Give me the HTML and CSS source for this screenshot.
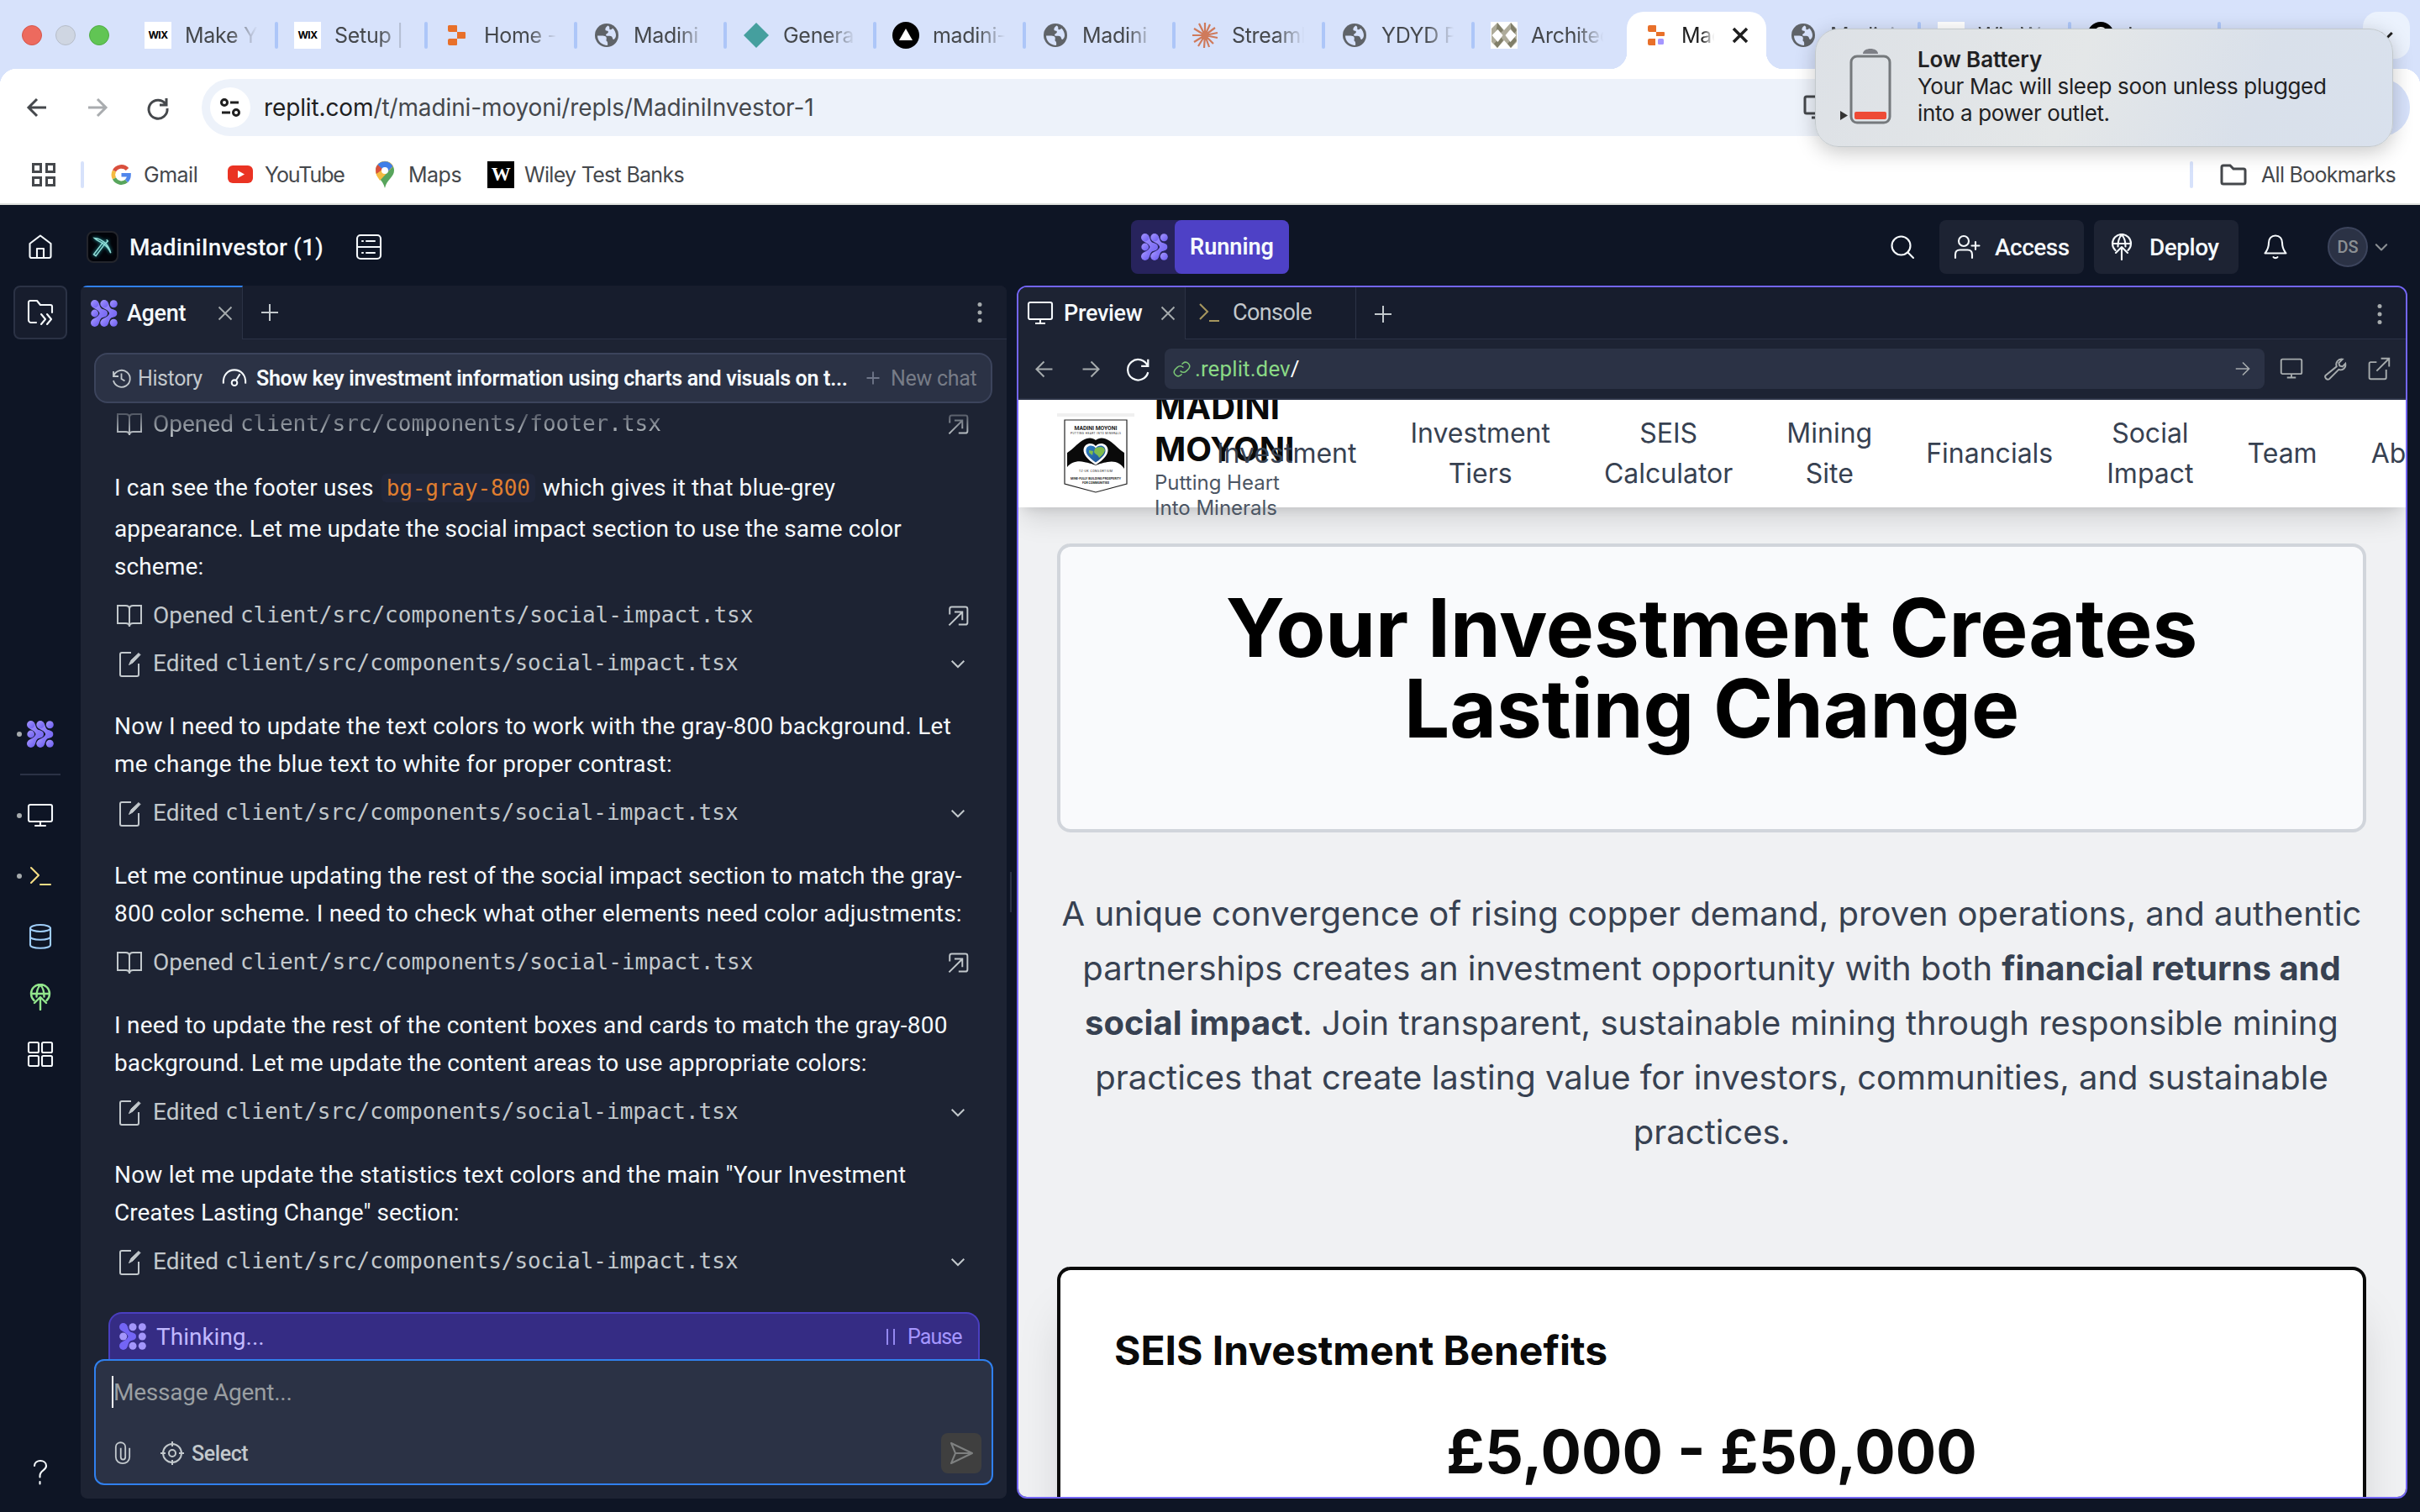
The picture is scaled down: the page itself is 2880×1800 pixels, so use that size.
FILE: index.html
```html
<!DOCTYPE html>
<html lang="en">
<head>
<meta charset="utf-8">
<title>MadiniInvestor (1)</title>
<link rel="stylesheet" href="styles.css">
</head>
<body>
<svg class="defs" aria-hidden="true">
  <defs>
    <linearGradient id="violet" x1="0" y1="0" x2="1" y2="1"><stop offset="0" stop-color="#a596ff"/><stop offset="1" stop-color="#6b5cf0"/></linearGradient>
    <linearGradient id="ocean" x1="0" y1="0" x2="1" y2="1"><stop offset="0" stop-color="#2f7fc4"/><stop offset="1" stop-color="#1d4f8f"/></linearGradient>
  </defs>
  <symbol id="globe" viewBox="0 0 32 32"><circle cx="16" cy="16" r="14" fill="#5f6368"/><path d="M5 16.500c4 0 8-.5 10 1 1.500 1.500.5 3 .5 5 1.500 1 2 2.500 1.500 5.500-6.500 0-12-5-12-11.500zM17.500 4.500C15 6 14 7.500 14.500 10c1.500 1 3 0 3.500 2-.5 2-3 2-3 4 2 2 5-.5 7 1.500 1.500 2 .5 3 2.500 3.500 1.500-1 2.500-3 2.500-5 0-3-1.500-6.500-4-8.500-.5 1.500-2 2-3.500 1.500-.5-2 .5-3-2-4.500z" fill="#d7e2fb"/></symbol>
  <symbol id="agent" viewBox="0 0 32 32">
    <g fill="url(#violet)"><path d="M1.500 8 8 1.500C11 5 10 8 13 10.500c3 1.500 7 1 7 5.500s-4 4-7 5.500c-3 2.500-2 5.500-5 9L1.500 24C5 21 9 20.500 10.500 16 9 11.500 5 11 1.500 8z"/><path d="M12.700 8 19.300 1.500c3 3.500 2 6.500 5 9 3 1.500 7 1 7 5.500s-4 4-7 5.500c-3 2.500-2 5.500-5 9L12.700 24c3.300-3 8-3.500 9.500-8-1.500-4.500-6.200-5-9.500-8z"/>
    <circle cx="4.700" cy="4.700" r="4.700"/><circle cx="16" cy="4.700" r="4.700"/><circle cx="27.300" cy="4.700" r="4.500"/><circle cx="4.700" cy="16" r="4.400"/><circle cx="4.700" cy="27.300" r="4.700"/><circle cx="16" cy="27.300" r="4.700"/><circle cx="27.300" cy="27.300" r="4.500"/></g>
  </symbol>
  <symbol id="thinking" viewBox="0 0 32 32">
    <g fill="#a396fa"><circle cx="16" cy="4.700" r="4.500"/><circle cx="27.300" cy="4.700" r="4.500"/><circle cx="4.700" cy="16" r="4.500"/><circle cx="27.300" cy="16" r="4.500"/><circle cx="16" cy="27.300" r="4.500"/><circle cx="27.300" cy="27.300" r="4.500"/></g>
    <g fill="#7365f5"><path d="M1.500 8 8 1.500C11 5 10 8 13 10.500c3 1.500 7 1 7 5.500s-4 4-7 5.500c-3 2.500-2 5.500-5 9L1.500 24C5 21 9 20.500 10.500 16 9 11.500 5 11 1.500 8z"/><circle cx="4.700" cy="4.700" r="4.700"/><circle cx="4.700" cy="27.300" r="4.700"/></g>
  </symbol>
  <symbol id="monitor" viewBox="0 0 32 32"><path d="M4 3h24a2 2 0 0 1 2 2v16a2 2 0 0 1-2 2H4a2 2 0 0 1-2-2V5a2 2 0 0 1 2-2zM16 23v5M10 28h12"/></symbol>
  <symbol id="terminal" viewBox="0 0 32 32"><path d="m5 6 9 9-9 9M16 26h12"/></symbol>
  <symbol id="deploy" viewBox="0 0 32 32"><path d="M8.500 20A11 11 0 1 1 23.500 20M5 12h22M16 31V16.500M9 23l7-7 7 7M16 1.500c-3 3-4.500 7-4.500 14M16 1.500c3 3 4.500 7 4.500 14"/></symbol>
  <symbol id="x" viewBox="0 0 32 32"><path d="m8 8 16 16M24 8 8 24"/></symbol>
  <symbol id="plus" viewBox="0 0 32 32"><path d="M16 6v20M6 16h20"/></symbol>
  <symbol id="left" viewBox="0 0 32 32"><path d="M27 16H6M16 6 6 16l10 10"/></symbol>
  <symbol id="right" viewBox="0 0 32 32"><path d="M5 16h21M16 6l10 10-10 10"/></symbol>
  <symbol id="down" viewBox="0 0 32 32"><path d="m7 12 9 9 9-9"/></symbol>
  <symbol id="kebab" viewBox="0 0 32 32"><g fill="#a6abad" stroke="none"><circle cx="16" cy="6.500" r="2.500"/><circle cx="16" cy="16" r="2.500"/><circle cx="16" cy="25.500" r="2.500"/></g></symbol>
  <symbol id="book" viewBox="0 0 32 32"><path d="M16 8c0-3-2-4-4.500-4H2v21h9.500c2.500 0 4.500 1 4.500 4 0-3 2-4 4.500-4H30V4h-9.500C18 4 16 5 16 8zM16 8v20"/></symbol>
  <symbol id="edit" viewBox="0 0 32 32"><path d="M18 3H7a2 2 0 0 0-2 2v24a2 2 0 0 0 2 2h18a2 2 0 0 0 2-2V16"/><path d="M15.500 17.500 18 12l9-8.500 2 2L20 15z" fill="currentColor" stroke-width="1"/></symbol>
  <symbol id="open" viewBox="0 0 32 32"><path d="M4 14V6a3 3 0 0 1 3-3h20a3 3 0 0 1 3 3v20a3 3 0 0 1-3 3H17M3 30 22 11M11 10.500h11.500v12"/></symbol>
  <symbol id="reload" viewBox="0 0 32 32"><path d="M29 3v9h-9M28.500 12A13.500 13.500 0 1 0 29 20"/></symbol>
  <symbol id="weave" viewBox="0 0 32 32"><rect width="32" height="32" fill="#fff"/><path d="M1 8 8 1l8 9 8-9 7 7v16l-7 7-8-9-8 9-7-7z" fill="#aeab9a"/><path d="m8 1 7 9-6 6-2-8zM24 1l7 9-3 4-4-6zM8 31l7-9-3-4-8 8zM24 31l7-9-3-4-8 8z" fill="#807e69"/><path d="m8.500 9 6 7-6 8-7-8zM23.500 9l7 7-7 8-6-8z" fill="#fff"/></symbol>
  <symbol id="replit" viewBox="0 0 32 32"><g fill="#e8702a"><path d="M6 4h9a1 1 0 0 1 1 1v7H7a2 2 0 0 1-2-2V5zM16 12h9a1 1 0 0 1 1 1v6a1 1 0 0 1-1 1h-9zM7 20h9v7a1 1 0 0 1-1 1H7a2 2 0 0 1-2-2v-4a2 2 0 0 1 2-2z"/></g></symbol>
  <symbol id="replit-run" viewBox="0 0 32 32"><g fill="#e8702a"><path d="M5 4h7a1 1 0 0 1 1 1v7H5a2 2 0 0 1-2-2V6a2 2 0 0 1 2-2zM13 12h9a1 1 0 0 1 1 1v3a1 1 0 0 1-1 1h-9zM5 20h7v8H5a2 2 0 0 1-2-2v-4a2 2 0 0 1 2-2z"/></g><rect x="15" y="20" width="7" height="7" rx="1.500" fill="#a596ff"/></symbol>
</svg>

<div class="tabstrip">
  <div class="lights"><i class="red"></i><i class="gray"></i><i class="green"></i></div>
  <div class="tab"><span class="wix">WIX</span><span class="title">Make Your</span></div>
  <div class="tab"><span class="wix">WIX</span><span class="title">Setup | W</span></div>
  <div class="tab"><svg><use href="#replit"/></svg><span class="title">Home - R</span></div>
  <div class="tab"><svg><use href="#globe"/></svg><span class="title">Madini I</span></div>
  <div class="tab"><svg viewBox="0 0 32 32"><path d="M16 1 31 16 16 31 1 16z" fill="#459f9e"/></svg><span class="title">General i</span></div>
  <div class="tab"><svg viewBox="0 0 32 32"><circle cx="16" cy="16" r="16"/><path d="m16 8 8 14H8z" fill="#fff"/></svg><span class="title">madini-in</span></div>
  <div class="tab"><svg><use href="#globe"/></svg><span class="title">Madini I</span></div>
  <div class="tab"><svg viewBox="0 0 32 32"><path d="M16 16V1M16 16l6-13M16 16 28 7M16 16l15-3M16 16l15 3M16 16l10 10M16 16l5 14M16 16l-1 15M16 16 8 29M16 16 3 24M16 16H1M16 16 3 8M16 16 9 2" stroke="#cf7a5b" stroke-width="2.200"/></svg><span class="title">Streamli</span></div>
  <div class="tab"><svg><use href="#globe"/></svg><span class="title">YDYD Pr</span></div>
  <div class="tab last"><svg><use href="#weave"/></svg><span class="title">Architect</span></div>
  <div class="tab active"><svg><use href="#replit-run"/></svg><span class="title">Mad</span><svg class="close"><use href="#x"/></svg></div>
  <div class="tab after"><svg><use href="#globe"/></svg><span class="title">Madini I</span></div>
  <div class="tab"><span class="wix"></span><span class="title">Wix Webs</span></div>
  <div class="tab"><svg viewBox="0 0 32 32"><circle cx="16" cy="16" r="16"/><circle cx="16" cy="14" r="7" fill="none" stroke="#fff" stroke-width="2"/></svg><span class="title">Inves</span></div>
  <span class="more"><svg><use href="#down"/></svg></span>
</div>

<div class="toolbar">
  <svg class="nav-ico"><use href="#left"/></svg>
  <svg class="nav-ico off"><use href="#right"/></svg>
  <svg class="nav-ico" viewBox="0 0 32 32"><path d="M26 5v8h-8M25.500 12.500A11 11 0 1 0 27 17"/></svg>
  <div class="omnibox">
    <span class="site"><svg viewBox="0 0 28 28"><circle cx="7" cy="8" r="3.500"/><path d="M14 8h10M4 20h10"/><circle cx="21" cy="20" r="3.500"/></svg></span>
    <span class="address"><b>replit.com</b>/t/madini-moyoni/repls/MadiniInvestor-1</span>
    <svg class="install"><use href="#monitor"/></svg>
    <span class="profile"></span>
  </div>
</div>

<div class="bookmarks">
  <svg class="apps" viewBox="0 0 28 28"><path d="M1.500 1.500h9v9h-9zM17.500 1.500h9v9h-9zM1.500 17.500h9v9h-9zM17.500 17.500h9v9h-9z"/></svg>
  <i class="bar"></i>
  <div class="bm gmail"><svg viewBox="0 0 24 24"><g fill="none" stroke-width="4.600"><path d="M19.500 5.500A9.500 9.500 0 0 0 4 7.500" stroke="#d94f3d"/><path d="M4 7.500a9.500 9.500 0 0 0 0 9" stroke="#f5bb41"/><path d="M4 16.500a9.500 9.500 0 0 0 14.500 3" stroke="#58a55c"/><path d="M18.500 19.500c2-1.800 3-4.500 3-7.300H12.500" stroke="#5086ec"/></g></svg><span>Gmail</span></div>
  <div class="bm yt"><svg viewBox="0 0 30 24"><rect y="1" width="30" height="21" rx="6" fill="#ea3323"/><path d="m12 7 8 4.500-8 4.500z" fill="#fff"/></svg><span>YouTube</span></div>
  <div class="bm maps"><svg viewBox="0 0 22 32"><path d="M11 0a11 11 0 0 0-11 11c0 8 8.500 10 11 21 2.500-11 11-13 11-21A11 11 0 0 0 11 0z" fill="#58a55c"/><path d="M2.500 4A11 11 0 0 1 21 6L5 23C3 19 0 17 0 11z" fill="#f5bb41"/><path d="M2.500 4 9 9l-8 6C-.5 10 0 7 2.500 4z" fill="#d94f3d"/><path d="M2.500 4A11 11 0 0 1 20.500 6L13 14z" fill="#3f7fe8"/><circle cx="11" cy="11" r="4" fill="#fff"/></svg><span>Maps</span></div>
  <div class="bm wiley"><i>W</i><span>Wiley Test Banks</span></div>
  <i class="bar end"></i>
  <div class="bm all"><svg viewBox="0 0 32 26"><path d="M2 4a2 2 0 0 1 2-2h8l4 4h12a2 2 0 0 1 2 2v14a2 2 0 0 1-2 2H4a2 2 0 0 1-2-2z" fill="none" stroke="#45484c" stroke-width="3"/></svg><span>All Bookmarks</span></div>
</div>

<div class="app">
  <header class="topbar">
    <svg class="i32" viewBox="0 0 32 32"><path d="M3.500 12 16 2.500 28.500 12v15a2 2 0 0 1-2 2h-21a2 2 0 0 1-2-2zM12 29V18h8v11"/></svg>
    <span class="tile"><svg viewBox="0 0 32 32"><path d="M4 3c11 1 20 9 23 21-3-7-7-11-12-14S7 6 4 3zM18 12 6 28l-3-2L16 9M21 5l2 2-6 6" /></svg></span>
    <span class="name">MadiniInvestor (1)</span>
    <svg class="i32 server" viewBox="0 0 32 32"><rect x="2" y="2" width="28" height="28" rx="4"/><path d="M2 16h28M13 9h10M13 23h10M8 9h1M8 23h1"/></svg>
    <div class="run"><span><svg><use href="#agent"/></svg></span><b>Running</b></div>
    <svg class="i32 search" viewBox="0 0 32 32"><circle cx="14.500" cy="14.500" r="11"/><path d="m22.500 22.500 6.500 6.500"/></svg>
    <div class="btn access"><svg class="i32" viewBox="0 0 32 32"><circle cx="12" cy="9" r="6"/><path d="M2 29v-4c0-4 2-5.500 5.500-5.500h9c3.500 0 5.500 1.500 5.500 5.500v4M26 10v9M21.500 14.500h9"/></svg><span>Access</span></div>
    <div class="btn dep"><svg class="i32"><use href="#deploy"/></svg><span>Deploy</span></div>
    <svg class="i32 bell" viewBox="0 0 32 32"><path d="M16 2.500c-5 0-8 3.500-8 8.500 0 7-2 9-4.500 12.500h25C26 20 24 18 24 11c0-5-3-8.500-8-8.500zM13.500 28c1 1.500 4 1.500 5 0"/></svg>
    <span class="avatar">DS</span>
    <svg class="caret"><use href="#down"/></svg>
  </header>

  <div class="workspace">
    <nav class="rail">
      <span class="files"><svg viewBox="0 0 32 32"><path d="M11 28H5a3 3 0 0 1-3-3V4a2 2 0 0 1 2-2h8l4 5h12a2 2 0 0 1 2 2v7M17 18l5 6-5 6M24 18l5 6-5 6"/></svg></span>
      <span class="tool r1 on"><svg><use href="#agent"/></svg></span>
      <i class="rule"></i>
      <span class="tool r2 on"><svg><use href="#monitor"/></svg></span>
      <span class="tool r3 on"><svg><use href="#terminal"/></svg></span>
      <span class="tool r4"><svg viewBox="0 0 32 32"><ellipse cx="16" cy="6" rx="12" ry="4"/><path d="M4 6v20c0 5 24 5 24 0V6M4 16c0 5 24 5 24 0"/></svg></span>
      <span class="tool r5"><svg><use href="#deploy"/></svg></span>
      <span class="tool r6"><svg viewBox="0 0 32 32"><rect x="2" y="2" width="12" height="12" rx="1.500"/><rect x="18" y="2" width="12" height="12" rx="1.500"/><rect x="2" y="18" width="12" height="12" rx="1.500"/><rect x="18" y="18" width="12" height="12" rx="1.500"/></svg></span>
      <span class="tool help"><svg viewBox="0 0 32 32"><path d="M9 9c0-8 14-8 14 0 0 6-7.500 5-7.500 12v1.500M15.500 28v2.500"/></svg></span>
    </nav>

    <section class="pane agent-pane">
      <div class="tabs">
        <div class="ptab current"><svg class="logo"><use href="#agent"/></svg><span>Agent</span><svg class="cl"><use href="#x"/></svg></div>
        <svg class="add"><use href="#plus"/></svg>
        <svg class="dots"><use href="#kebab"/></svg>
      </div>
      <div class="history">
        <svg viewBox="0 0 24 24"><path d="M3 4v6h6M3.500 9A10 10 0 1 1 3 15M12.500 6.500V13l4 2.500"/></svg><span class="h">History</span>
        <svg class="gauge" viewBox="0 0 32 32"><path d="M2 23C0 0 32 0 30 23M18 19l5-8"/><circle cx="16" cy="22" r="3.500"/></svg>
        <b>Show key investment information using charts and visuals on t...</b>
        <svg class="pl"><use href="#plus"/></svg><span class="n">New chat</span>
      </div>
      <div class="chat">
        <div class="row fade"><svg><use href="#book"/></svg><span class="act">Opened</span><code>client/src/components/footer.tsx</code><svg class="end"><use href="#open"/></svg></div>
        <p class="tall"><span class="ln c1">I can see the footer uses <code>bg-gray-800</code> which gives it that blue-grey</span><span class="ln c2">appearance. Let me update the social impact section to use the same color</span><span class="ln">scheme:</span></p>
        <div class="row"><svg><use href="#book"/></svg><span class="act">Opened</span><code>client/src/components/social-impact.tsx</code><svg class="end"><use href="#open"/></svg></div>
        <div class="row"><svg><use href="#edit"/></svg><span class="act">Edited</span><code>client/src/components/social-impact.tsx</code><svg class="end"><use href="#down"/></svg></div>
        <p><span class="ln wide">Now I need to update the text colors to work with the gray-800 background. Let</span><span class="ln wide">me change the blue text to white for proper contrast:</span></p>
        <div class="row"><svg><use href="#edit"/></svg><span class="act">Edited</span><code>client/src/components/social-impact.tsx</code><svg class="end"><use href="#down"/></svg></div>
        <p><span class="ln">Let me continue updating the rest of the social impact section to match the gray-</span><span class="ln mid">800 color scheme. I need to check what other elements need color adjustments:</span></p>
        <div class="row"><svg><use href="#book"/></svg><span class="act">Opened</span><code>client/src/components/social-impact.tsx</code><svg class="end"><use href="#open"/></svg></div>
        <p><span class="ln wide">I need to update the rest of the content boxes and cards to match the gray-800</span><span class="ln">background. Let me update the content areas to use appropriate colors:</span></p>
        <div class="row"><svg><use href="#edit"/></svg><span class="act">Edited</span><code>client/src/components/social-impact.tsx</code><svg class="end"><use href="#down"/></svg></div>
        <p><span class="ln mid">Now let me update the statistics text colors and the main "Your Investment</span><span class="ln slim">Creates Lasting Change" section:</span></p>
        <div class="row"><svg><use href="#edit"/></svg><span class="act">Edited</span><code>client/src/components/social-impact.tsx</code><svg class="end"><use href="#down"/></svg></div>
      </div>
      <div class="thinking"><svg><use href="#thinking"/></svg><span>Thinking...</span><i class="pausebars"></i><span class="pause">Pause</span></div>
      <div class="composer">
        <div class="prompt">Message Agent...</div>
        <div class="actions">
          <svg class="clip" viewBox="0 0 22 30"><path d="M20 8v12c0 11-18 11-18 0V7c0-8 12.500-8 12.500 0v13c0 4.500-6 4.500-6 0V8"/></svg>
          <svg class="target" viewBox="0 0 28 28"><circle cx="14" cy="14" r="11"/><circle cx="14" cy="14" r="4"/><path d="M14 0v6M14 22v6M0 14h6M22 14h6"/></svg>
          <span>Select</span>
          <i class="send"><svg viewBox="0 0 32 32"><path d="M4 4 29 16 4 28l5-12zM9 16h19"/></svg></i>
        </div>
      </div>
    </section>

    <div class="gutter"><i></i></div>

    <section class="pane preview-pane">
      <div class="tabs">
        <div class="ptab pv"><svg class="i32"><use href="#monitor"/></svg><span>Preview</span><svg class="cl"><use href="#x"/></svg></div>
        <div class="ptab con"><svg class="i32"><use href="#terminal"/></svg><span>Console</span></div>
        <svg class="add"><use href="#plus"/></svg>
        <svg class="dots"><use href="#kebab"/></svg>
      </div>
      <div class="urlbar">
        <svg class="a"><use href="#left"/></svg><svg class="a"><use href="#right"/></svg><svg class="re"><use href="#reload"/></svg>
        <div class="url"><svg class="link" viewBox="0 0 24 24"><path d="M10 14a5 5 0 0 0 7.500.5l3-3a5 5 0 0 0-7-7L12 6M14 10a5 5 0 0 0-7.500-.5l-3 3a5 5 0 0 0 7 7L12 18"/></svg><span>.replit.dev<b>/</b></span><svg class="go"><use href="#right"/></svg></div>
        <svg class="t"><use href="#monitor"/></svg>
        <svg class="t" viewBox="0 0 32 32"><path d="M19 13c-2-5 2-11 8-10l-5 5 1 4 4 1 4-4c1 6-4 10-9 8L9 30c-3 2-7-2-5-5z" transform="translate(-1 0)"/></svg>
        <svg class="t" viewBox="0 0 32 32"><path d="M13 7H5a2 2 0 0 0-2 2v19a2 2 0 0 0 2 2h19a2 2 0 0 0 2-2V17M19 2h11v11M30 2 13 19"/></svg>
      </div>
      <div class="site-page">
        <header class="site-nav">
          <div class="brand">
            <svg viewBox="0 0 92 96"><path d="M0 0h92v4H0z" fill="#f0f0f0"/><path d="M9 8h74v76L46 94 9 84z" fill="#fff" stroke="#222" stroke-width="1.200"/>
              <g text-anchor="middle" font-family="Roboto, sans-serif" font-weight="700" fill="#222"><text x="46" y="19.500" font-size="6.800" textLength="51">MADINI MOYONI</text><text x="46" y="25" font-size="3.200" textLength="60" font-weight="400">PUTTING HEART INTO MINERALS</text><text x="46" y="70" font-size="3.600" textLength="40" font-weight="400">TZ-UK CONSORTIUM</text><text x="46" y="78.500" font-size="3.600" textLength="60">MINE-FULLY BUILDING PROSPERITY</text><text x="46" y="83.500" font-size="3.600" textLength="32">FOR COMMUNITIES</text></g>
              <path d="M12 47c7-4 12-11 18-14.500 6-4 12-4 16-.5 4-3.500 10-3.500 16 .5 6 3.500 11 10.500 18 14.500v19c-4-7-12-10-20-8-6 1-9 2-14 4-5-2-8-3-14-4-8-2-16 1-20 6z" fill="#0a0a0a"/>
              <path d="M46 61.500C36 55 31 49 31.500 43c1-8 11-9 14.500-4 3.500-5 13.500-4 14.500 4 .5 6-4.500 12-14.500 18.500z" fill="#fff"/>
              <path d="M46 58.500C37 52 34 48 34.500 43.500c1-6.500 9-6 11.500-2 2.500-4 10.500-4.500 11.500 2 .5 4.500-2.500 8.500-11.500 15z" fill="url(#ocean)"/><path d="M45 42c5-3 11-3 12 2-1 4-4 7-7 9-1-4-5-4-6-7zM38 44l5 1-1 5-4-3z" fill="#7fbb4c"/></svg>
            <div class="words"><strong>MADINI<br>MOYONI</strong><small>Putting Heart<br>Into Minerals</small></div>
          </div>
          <div class="links"><span>Investment</span><span>Investment<br>Tiers</span><span>SEIS<br>Calculator</span><span>Mining<br>Site</span><span>Financials</span><span>Social<br>Impact</span><span>Team</span><span>About</span></div>
        </header>
        <div class="hero"><h1>Your Investment Creates<br>Lasting Change</h1></div>
        <p class="lead">A unique convergence of rising copper demand, proven operations, and authentic<br>partnerships creates an investment opportunity with both <b>financial returns and</b><br><b>social impact</b>. Join transparent, sustainable mining through responsible mining<br>practices that create lasting value for investors, communities, and sustainable<br>practices.</p>
        <div class="benefits"><h2>SEIS Investment Benefits</h2><div class="amount">£5,000 - £50,000</div></div>
      </div>
    </section>
  </div>
</div>

<aside class="notice">
  <svg viewBox="0 0 68 92"><path d="M30 7c0-8 18-8 18 0z" fill="#7d7f86"/><rect x="16" y="10" width="46" height="79" rx="7" fill="none" stroke="#75797c" stroke-width="3"/><rect x="20" y="76" width="38" height="9" rx="2" fill="#ee4b36"/><path d="m3 75 9 5.500L3 86z" fill="#333"/></svg>
  <div><b>Low Battery</b><span>Your Mac will sleep soon unless plugged</span><span class="s">into a power outlet.</span></div>
</aside>
</body>
</html>
```
FILE: styles.css
```css
* { box-sizing: border-box; }
html, body { margin: 0; width: 2880px; height: 1800px; overflow: hidden; }
body { font-family: Inter, sans-serif; background: #0e1525; display: flex; flex-direction: column; position: relative; }
svg { display: block; flex: none; fill: none; overflow: visible; }
i { font-style: normal; }
.defs { position: absolute; width: 0; height: 0; }
.i32 { width: 32px; height: 32px; }

/* Browser tab strip */
.tabstrip { height: 82px; flex: none; background: #d7e2fb; display: flex; align-items: center; padding-top: 2px; overflow: hidden; }
.lights { display: flex; gap: 16px; padding-left: 26px; width: 172px; flex: none; }
.lights i { width: 24px; height: 24px; border-radius: 50%; }
.red { background: #ed6a5e; border: 1px solid #d5564b; }
.gray { background: #cfd6e2; border: 1px solid #b6bdc9; }
.green { background: #61c554; border: 1px solid #4fad43; }
.tab { width: 178px; flex: none; display: flex; align-items: center; height: 32px; position: relative; }
.tab > svg { width: 32px; height: 32px; fill: #000; }
.tab::after { content: ""; width: 4px; height: 32px; background: #adc6f8; border-radius: 2px; margin-left: 19px; }
.tab .title { margin-left: 16px; width: 88px; flex: none; overflow: hidden; white-space: nowrap; font-size: 25px; letter-spacing: -.3px; color: #45484c; -webkit-mask-image: linear-gradient(90deg, #000 60%, transparent 98%); mask-image: linear-gradient(90deg, #000 60%, transparent 98%); }
.wix { width: 32px; height: 32px; background: #fff; color: #000; font: 700 12px/32px Inter, sans-serif; text-align: center; letter-spacing: -.5px; flex: none; }
.tab.last { width: 162px; }
.tab.last::after, .tab.active::after { display: none; }
.tab.active { width: 166px; height: 68px; align-self: flex-end; background: #fff; border-radius: 20px 20px 0 0; padding-left: 22px; padding-bottom: 12px; }
.tab.active::before { content: ""; position: absolute; left: -20px; right: -20px; bottom: 0; height: 20px; background: radial-gradient(circle at 0 0, transparent 20px, #fff 20.500px) 0 0 / 20px 20px no-repeat, radial-gradient(circle at 100% 0, transparent 20px, #fff 20.500px) 100% 0 / 20px 20px no-repeat; }
.tab.active .title { width: 40px; margin-left: 11px; color: #1f1f1f; }
.tab.active .close { margin-left: 14px; stroke: #1f1f1f; stroke-width: 3.500; width: 32px; height: 32px; }
.tab.after { margin-left: 28px; width: 176px; }
.tab.after::after { margin-left: 16px; }
.more { width: 56px; height: 56px; margin-left: auto; margin-right: 12px; flex: none; border-radius: 18px; background: #ebf2fd; display: flex; align-items: center; justify-content: center; }
.more svg { width: 24px; height: 24px; stroke: #1f1f1f; stroke-width: 4; }

/* Browser toolbar */
.toolbar { height: 88px; flex: none; background: radial-gradient(circle at 20px 20px, #fff 20px, #d7e2fb 20.500px) 0 0 / 20px 20px no-repeat, radial-gradient(circle at 0 20px, #fff 20px, #d7e2fb 20.500px) 100% 0 / 20px 20px no-repeat, #fff; display: flex; align-items: center; padding: 4px 12px 0 28px; }
.nav-ico { width: 32px; height: 32px; margin-right: 40px; stroke: #45484c; stroke-width: 3; }
.nav-ico.off { stroke: #a9acaf; }
.nav-ico:nth-child(3) { margin-right: 36px; }
.omnibox { flex: 1; height: 68px; border-radius: 34px; background: #edf2fa; display: flex; align-items: center; padding-left: 10px; overflow: hidden; }
.site { width: 48px; height: 48px; border-radius: 50%; background: #fff; display: flex; align-items: center; justify-content: center; }
.site svg { width: 28px; height: 28px; stroke: #1f1f1f; stroke-width: 3; }
.address { margin-left: 16px; font-size: 28px; width: 662px; white-space: nowrap; letter-spacing: -.12px; color: #45484c; }
.address b { font-weight: 400; color: #1f1f1f; }
.install { width: 32px; height: 32px; margin-left: 1170px; stroke: #45484c; stroke-width: 3; }
.profile { margin-left: auto; width: 100px; height: 68px; background: #d7e2fb; }

/* Bookmarks */
.bookmarks { height: 74px; flex: none; background: #fff; border-bottom: 2px solid #dfe2dd; display: flex; align-items: center; padding: 3px 30px 0 38px; font-size: 25px; color: #45484c; white-space: nowrap; }
.apps { width: 28px; height: 28px; stroke: #45484c; stroke-width: 3; }
.bar { width: 4px; height: 32px; border-radius: 2px; background: #d7e2fb; margin: 0 32px 0 30px; flex: none; }
.bm { display: flex; align-items: center; flex: none; letter-spacing: -.5px; }
.gmail { width: 139px; } .gmail svg { width: 24px; height: 24px; margin-right: 15px; }
.yt { width: 176px; letter-spacing: -1.100px; } .yt svg { width: 30px; height: 24px; margin-right: 14px; }
.maps { width: 133px; } .maps svg { width: 22px; height: 32px; margin-right: 17px; }
.wiley { letter-spacing: -.7px; }
.wiley i { width: 32px; height: 32px; background: #000; color: #fff; font: 700 23px/32px "Liberation Serif", serif; text-align: center; margin-right: 12px; }
.bar.end { margin-left: auto; margin-right: 32px; }
.all { width: 208px; letter-spacing: -.7px; } .all svg { width: 32px; height: 26px; margin-right: 17px; }

/* Replit shell */
.app { flex: 1; min-height: 0; display: flex; flex-direction: column; color: #f5f9fc; font-family: Roboto, "Noto Sans", sans-serif; }
.topbar { height: 96px; flex: none; display: flex; align-items: center; padding: 4px 32px 0; white-space: nowrap; font-size: 28px; }
.topbar > svg, .btn svg, .rail svg { stroke: #f5f9fc; stroke-width: 2.100; stroke-linecap: round; stroke-linejoin: round; }
.tile { width: 38px; height: 38px; margin-left: 39px; border-radius: 8px; border: 2px solid #23252c; background: #02040a; display: flex; align-items: center; justify-content: center; }
.tile svg { width: 27px; height: 27px; stroke: #8fdcd6; stroke-width: 1.800; filter: drop-shadow(0 0 2px #24a8b0); }
.name { margin-left: 13px; width: 269px; font-weight: 500; letter-spacing: .1px; }
.run { margin-left: 891px; display: flex; width: 188px; height: 64px; border-radius: 8px; background: #27235c; }
.run span { width: 52px; padding: 16px 0 0 12px; }
.run svg { width: 32px; height: 32px; }
.run b { flex: 1; background: #4e41c6; border-radius: 8px; line-height: 64px; padding-left: 18px; font-weight: 600; font-size: 27px; }
.search { margin-left: 714px; }
.btn { width: 172px; height: 64px; background: #1d2333; border-radius: 8px; display: flex; align-items: center; padding-left: 17px; font-weight: 500; }
.btn span { margin-left: 17px; letter-spacing: -.5px; }
.access { margin-left: 28px; } .dep { margin-left: 12px; }
.bell { margin-left: 28px; }
.avatar { width: 48px; height: 48px; margin-left: 46px; border-radius: 50%; background: #2b3245; border: 2px solid #3c445c; color: #8b9094; font: 500 20px/44px Roboto, sans-serif; text-align: center; }
.topbar .caret { width: 22px; height: 22px; margin-left: 5px; stroke: #8b9094; stroke-width: 3; }

.workspace { height: 1444px; display: flex; }
.rail { width: 96px; flex: none; display: flex; flex-direction: column; align-items: center; }
.files { width: 64px; height: 64px; border: 2px solid #2b3245; border-radius: 8px; background: #171d2d; display: flex; align-items: center; justify-content: center; }
.files svg, .tool svg { width: 32px; height: 32px; }
.tool { height: 32px; width: 96px; display: flex; justify-content: center; position: relative; flex: none; }
.tool.on::before { content: ""; position: absolute; left: 20px; top: 13px; width: 6px; height: 6px; border-radius: 50%; background: #a6abad; }
.r1 { margin-top: 454px; } .r1 svg { stroke: none; }
.rule { width: 48px; height: 2px; background: #2b3245; margin-top: 31px; flex: none; }
.r2 { margin-top: 32px; }
.r3 { margin-top: 40px; } .rail .r3 svg { stroke: #f5dd85; }
.r4 { margin-top: 40px; } .rail .r4 svg { stroke: #9fcdf8; }
.r5 { margin-top: 40px; } .rail .r5 svg { stroke: #92e58c; stroke-width: 2.400; }
.r6 { margin-top: 36px; }
.help { margin-top: auto; margin-bottom: 16px; }

.pane { display: flex; flex-direction: column; overflow: hidden; background: #1d2333; border-radius: 8px; font-size: 28px; }
.agent-pane { width: 1102px; flex: none; }
.tabs { height: 64px; flex: none; background: #171d2d; display: flex; border-bottom: 1px solid #2b3245; }
.ptab { display: flex; align-items: center; font-size: 27px; letter-spacing: -.3px; height: 64px; padding-bottom: 1px; }
.current { width: 193px; background: #1d2333; border-top: 2px solid #3080ee; border-right: 1px solid #2b3245; padding-left: 12px; font-weight: 500; }
.ptab .logo { width: 32px; height: 32px; margin-right: 11px; }
.ptab .cl { width: 30px; height: 30px; margin-left: auto; margin-right: 5px; stroke: #a6abad; stroke-width: 2; }
.add { width: 32px; height: 32px; margin: 16px 0 0 16px; stroke: #c2c8cc; stroke-width: 2; }
.dots { width: 32px; height: 32px; margin: 16px 16px 0 auto; }
.history { height: 60px; flex: none; margin: 16px 17px 0 16px; border: 2px solid #3c445c; border-radius: 16px; background: #2b3245; display: flex; align-items: center; padding-left: 18px; white-space: nowrap; font-size: 25px; color: #c2c8cc; }
.history svg { width: 24px; height: 24px; stroke: #c2c8cc; stroke-width: 1.800; }
.history .h { margin-left: 8px; width: 100px; letter-spacing: -.4px; }
.history .gauge { width: 30px; height: 30px; stroke: #f5f9fc; stroke-width: 2.200; }
.history b { margin-left: 11px; width: 722px; color: #f5f9fc; font-weight: 600; letter-spacing: -.3px; }
.history .pl { stroke: #6f7689; stroke-width: 2.500; margin-right: 9px; }
.history .n { color: #777c87; letter-spacing: -.3px; }

.chat { flex: 1; min-height: 0; margin-top: -4px; padding: 0 44px 0 40px; line-height: 45px; white-space: nowrap; color: #f5f9fc; }
.chat p { margin: 8px 0 7px; padding-top: 16px; }
.ln { display: block; height: 45px; letter-spacing: .1px; }
.ln.wide { letter-spacing: .25px; }
.ln.mid { letter-spacing: .2px; }
.ln.slim { letter-spacing: 0; }
.tall .c1 { height: 50px; line-height: 48px; letter-spacing: .12px; }
.ln.c2 { letter-spacing: .05px; }
.tall code { color: #e07f2f; background: #20263a; padding: 2px 6px; margin: 0 2px; border-radius: 6px; letter-spacing: -.1px; }
.chat code { font-family: "DejaVu Sans Mono", monospace; font-size: 26px; }
.row { height: 57px; display: flex; align-items: center; color: #c2c8cc; padding-left: 2px; }
.row code { margin-left: 8px; }
.row svg { width: 32px; height: 32px; margin-right: 12px; stroke: currentColor; stroke-width: 2; }
.row .end { width: 26px; height: 26px; margin: 0 1px 0 auto; stroke-width: 2.400; }
.row.fade { -webkit-mask-image: linear-gradient(rgba(0,0,0,.2) 20%, #000 75%); mask-image: linear-gradient(rgba(0,0,0,.2) 20%, #000 75%); }

.thinking { height: 56px; flex: none; margin: 0 32px 0 33px; background: #352c84; border: 2px solid #4a3fc0; border-bottom: 0; border-radius: 16px 16px 0 0; display: flex; align-items: center; padding: 0 18px 0 11px; color: #c0b8ff; }
.thinking svg { width: 32px; height: 32px; margin-right: 12px; }
.pausebars { margin-left: auto; width: 10px; height: 19px; border: solid #9488f0; border-width: 0 2px; margin-right: 15px; }
.pause { font-size: 25px; letter-spacing: -.9px; color: #a596ff; width: 66px; }
.composer { height: 150px; flex: none; margin: 0 16px 16px; border: 2px solid #3080ee; border-radius: 12px; background: #2b3245; }
.prompt { margin: 18px 0 0 19px; height: 38px; line-height: 40px; border-left: 2px solid #fff; color: #9a9fa2; letter-spacing: -.25px; }
.actions { display: flex; align-items: center; height: 48px; margin-top: 30px; padding: 0 12px 0 22px; color: #c2c8cc; font-size: 25px; letter-spacing: -.4px; font-weight: 500; }
.actions svg { stroke: #c2c8cc; stroke-width: 2; }
.clip { width: 20px; height: 28px; } .target { width: 28px; height: 28px; margin: 0 9px 0 35px; }
.send { width: 48px; height: 48px; margin-left: auto; border-radius: 8px; background: #3f3f3f; display: flex; align-items: center; justify-content: center; }
.send svg { width: 32px; height: 32px; stroke: #7e8080; stroke-linejoin: round; }
.gutter { width: 12px; flex: none; display: flex; align-items: center; padding-left: 4px; }
.gutter i { width: 2px; height: 48px; background: #2b3245; }

/* Preview pane */
.preview-pane { width: 1655px; flex: none; border: 2px solid #7365f5; border-radius: 12px; }
.preview-pane .tabs { height: 62px; }
.preview-pane .ptab { height: 62px; }
.preview-pane .i32 { stroke: #f5f9fc; stroke-width: 2.100; }
.preview-pane .dots { margin-right: 15px; }
.pv { width: 199px; background: #1d2333; border-right: 1px solid #2b3245; padding-left: 10px; font-weight: 500; }
.pv span { margin-left: 12px; }
.con { width: 203px; border-right: 1px solid #2b3245; padding-left: 12px; color: #c2c8cc; height: 61px !important; }
.con span { margin-left: 12px; letter-spacing: -.6px; }
.con .i32 { stroke: #a5965e; }
.urlbar { height: 72px; flex: none; border-bottom: 2px solid #2b3245; display: flex; align-items: center; padding: 0 18px 0 16px; }
.urlbar svg { stroke: #a6abad; stroke-width: 2.200; }
.a { width: 29px; height: 29px; margin-right: 27px; }
.urlbar .re { width: 29px; height: 29px; margin-right: 17px; stroke: #f5f9fc; stroke-width: 2.500; }
.url { width: 1311px; height: 48px; background: #2b3245; border-radius: 8px; display: flex; align-items: center; padding: 0 14px 0 9px; color: #8ad985; font-size: 26px; letter-spacing: .1px; }
.url b { color: #fff; font-weight: 400; }
.url .link { width: 23px; height: 23px; stroke: #79c474; stroke-width: 1.600; margin-right: 4px; }
.url .go { width: 24px; height: 24px; margin-left: auto; }
.t { width: 28px; height: 28px; margin-left: 24px; }
.url + .t { margin-left: 18px; }

.site-page { flex: 1; min-height: 0; overflow: hidden; background: #f0f1f3; font-family: Inter, sans-serif; padding: 0 47px 0 46px; }
.site-nav { height: 128px; margin: 0 -47px 0 -46px; padding-left: 46px; background: #fff; display: flex; align-items: center; box-shadow: 0 20px 30px -6px rgba(0,0,0,.12), 0 8px 12px -6px rgba(0,0,0,.1); }
.brand { width: 190px; flex: none; display: flex; height: 96px; }
.brand svg { width: 92px; height: 96px; }
.words { margin: -32px 0 0 24px; white-space: nowrap; }
.words strong { display: block; font-size: 40px; line-height: 50px; font-weight: 700; color: #0a0a0a; }
.words small { display: block; font-size: 24px; line-height: 30px; color: #4b5563; }
.links { display: flex; align-items: center; gap: 64px; font-size: 32px; line-height: 48px; color: #374151; text-align: center; white-space: nowrap; position: relative; }
.hero { height: 344px; margin-top: 43px; border: 4px solid #d1d5db; border-radius: 16px; background: #f9fafc; padding-top: 48px; }
h1 { margin: 0; text-align: center; font-size: 96px; line-height: 96px; font-weight: 700; color: #000; }
.lead { margin: 64px -40px 0; height: 325px; text-align: center; white-space: nowrap; font-size: 40px; line-height: 65px; color: #374151; }
.benefits { margin-top: 128px; height: 400px; border: 4px solid #0a0a0a; border-radius: 16px; background: #fff; padding: 64px; color: #0a0a0a; box-shadow: 0 50px 60px -14px rgba(0,0,0,.18); }
h2 { margin: 0; font-size: 48px; line-height: 64px; font-weight: 700; }
.amount { text-align: center; font-size: 72px; line-height: 72px; font-weight: 700; margin-top: 52px; }

/* System notification floating over the browser */
.notice { position: absolute; left: 2160px; top: 34px; width: 688px; height: 141px; border-radius: 28px; background: linear-gradient(110deg, #dde1e6 0%, #e4e7e8 45%, #d9e0ea 75%, #d9e1ed 100%); border: 1px solid #c3c9cc; box-shadow: 0 6px 24px rgba(0,0,0,.22); display: flex; padding: 20px 0 0 26px; font-size: 26px; line-height: 32px; color: #1f2123; }
.notice svg { width: 68px; height: 92px; margin-right: 27px; margin-top: 2px; }
.notice div { display: flex; flex-direction: column; white-space: nowrap; }
.notice b { font-weight: 600; letter-spacing: -.1px; }
.notice span { letter-spacing: -.35px; }
```
